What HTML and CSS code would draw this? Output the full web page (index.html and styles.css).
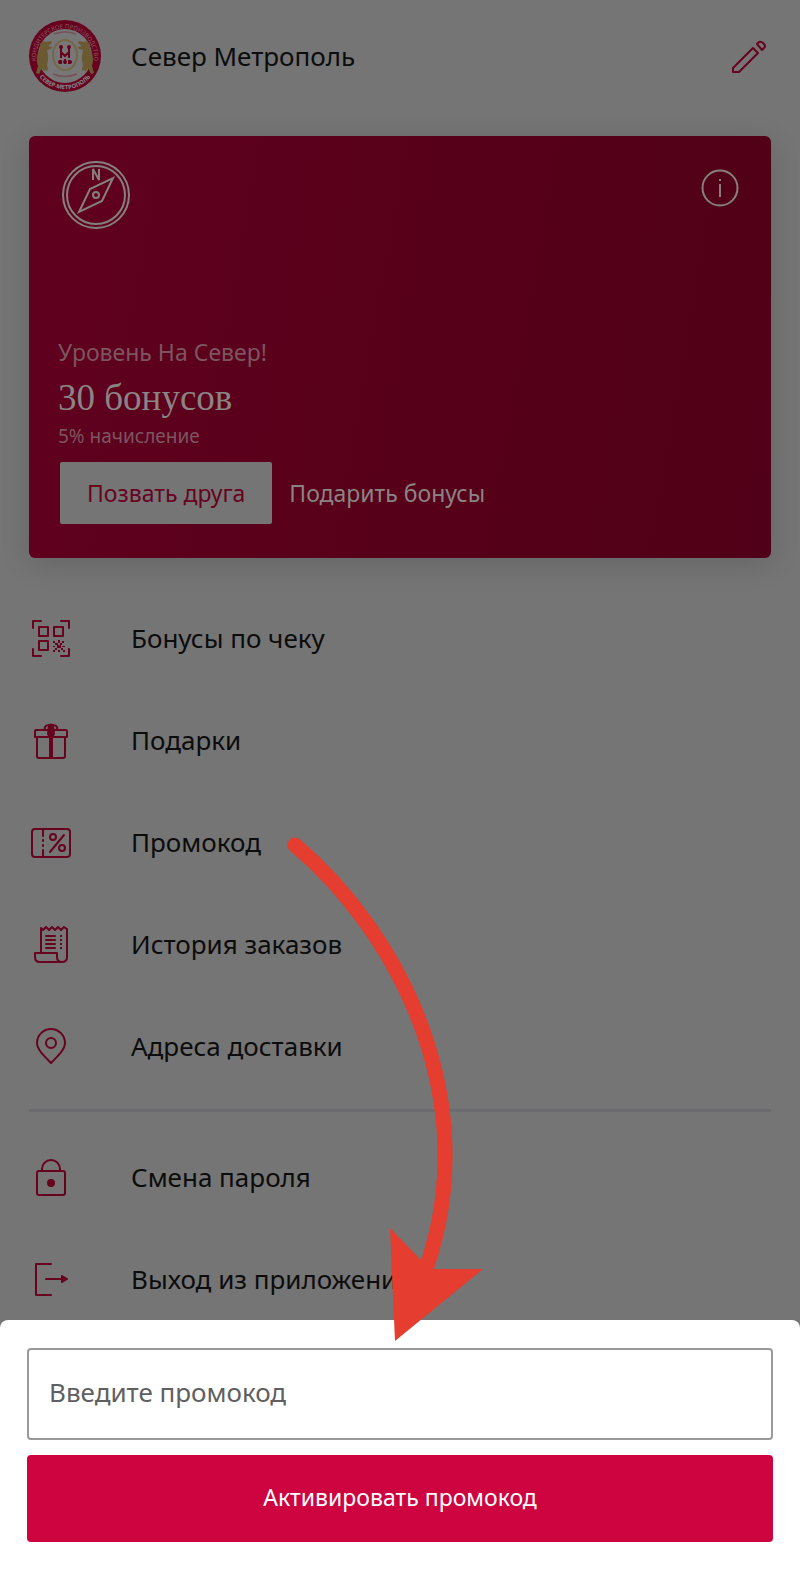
FILE: index.html
```html
<!DOCTYPE html>
<html lang="ru">
<head>
<meta charset="utf-8">
<meta name="viewport" content="width=device-width, initial-scale=1">
<title>Север Метрополь</title>
<link rel="stylesheet" href="styles.css">
</head>
<body>
<main class="profile">
  <header class="header">
    <svg class="logo" viewBox="0 0 72 72" aria-hidden="true">
      <defs>
        <path id="arc-top" d="M8 45A29 29 0 1 1 64 45"/>
        <path id="arc-bottom" d="M7 52A33 33 0 0 0 65 52"/>
      </defs>
      <circle cx="36" cy="36" r="36" fill="#67021f"/>
      <circle cx="36" cy="36" r="27" fill="#777"/>
      <g fill="#6b5a31">
        <path id="bear" d="M11 24l3-3 3 1 5-1 1 2-4 3 4 1-1 2-4 1c1 5 2 9 0 14l1 6-4 1-2-3-3 6-3-1 2-7c-2-6-1-12 2-17z"/>
        <use href="#bear" transform="matrix(-1 0 0 1 72 0)"/>
      </g>
      <ellipse cx="36" cy="35" rx="12" ry="15" fill="none" stroke="#746747" stroke-width="2"/>
      <path d="M25 14q11-4 22 0M24 54q12 5 24 0" fill="none" stroke="#745159" stroke-width="1.500"/>
      <path d="M32 34v-7M40 34v-7M32 38v-6l4 4 4-4v6M32 44v-4M36 44v-5M40 44v-4" fill="none" stroke="#67021f" stroke-width="2"/>
      <g fill="#67021f"><circle cx="32" cy="27" r="2"/><circle cx="40" cy="27" r="2"/><circle cx="31" cy="42" r="2"/><circle cx="41" cy="42" r="2"/><circle cx="36" cy="42" r="2"/></g>
      <text class="logo-text"><textPath href="#arc-top" startOffset="50%">КОНДИТЕРСКОЕ ПРОИЗВОДСТВО</textPath></text>
      <text class="logo-text logo-name"><textPath href="#arc-bottom" startOffset="50%">СЕВЕР-МЕТРОПОЛЬ</textPath></text>
    </svg>
    <h1 class="name">Север Метрополь</h1>
    <button class="icon-button" type="button" aria-label="Редактировать">
      <svg class="icon-edit" viewBox="0 0 36 36"><path d="M2 34v-4L22 10l5 5L8 34zM26 6l2-2q2-1 4 1l1 1q2 2 0 4l-2 2z"/></svg>
    </button>
  </header>

  <section class="card">
    <div class="card-top">
      <svg class="compass" viewBox="0 0 70 70" aria-hidden="true">
        <circle cx="35" cy="35" r="33"/><circle cx="35" cy="35" r="29"/>
        <path d="M52 18L41 41 18 52 29 29z"/><circle cx="35" cy="35" r="3"/>
        <path d="M32 20V9l6 11V9"/>
      </svg>
      <button class="icon-button" type="button" aria-label="Информация">
        <svg class="icon-info" viewBox="0 0 38 38"><circle cx="19" cy="19" r="17.500"/><path d="M19 15v13M19 10v2"/></svg>
      </button>
    </div>
    <p class="level">Уровень На Север!</p>
    <p class="bonus">30 бонусов</p>
    <p class="rate">5% начисление</p>
    <div class="card-actions">
      <button class="invite" type="button">Позвать друга</button>
      <button class="donate" type="button">Подарить бонусы</button>
    </div>
  </section>

  <nav class="menu">
    <a class="item" href="#check">
      <svg class="icon" viewBox="0 0 42 42"><path d="M3 10V3h8M31 3h8v7M39 31v7h-8M11 38H3v-7M9 9h9v9H9zM24 9h9v9h-9zM9 23h9v9H9z"/><path class="solid bare" d="M23 23h2v2h-2zM28 22h2v3h-2zM32 23h2v2h-2zM25 25h3v2h-3zM30 25h2v2h-2zM27 27h4v3h-4zM23 28h2v1h-2zM32 28h3v1h-3zM25 30h2v2h-2zM31 30h2v2h-2zM23 32h2v2h-2zM28 32h2v2h-2zM33 32h2v2h-2z"/></svg>
      <span>Бонусы по чеку</span></a>
    <a class="item" href="#gifts">
      <svg class="icon" viewBox="0 0 42 42"><path d="M7 17v19q0 2 2 2h24q2 0 2-2V17M6 10h30q1 0 1 2v5H5v-5q0-2 1-2zM19 10h-3q-2-1-1-3 1-2 4-2l2 2 2-2q3 0 4 2 1 2-1 3h-3"/><path class="solid bare" d="M18 5q3-3 6 0l1 9-2 4v20h-4V18l-2-4z"/></svg>
      <span>Подарки</span></a>
    <a class="item" href="#promo">
      <svg class="icon" viewBox="0 0 42 42"><rect x="2" y="7" width="38" height="28" rx="3"/><path d="M13 8v6M13 18v1M13 23v1M13 28v6M34 13L20 30"/><circle cx="23" cy="15" r="3"/><circle cx="32" cy="26" r="3"/></svg>
      <span>Промокод</span></a>
    <a class="item" href="#orders">
      <svg class="icon" viewBox="0 0 42 42"><path d="M11 28V4l2 2 3-3 3 3 3-3 3 3 3-3 3 3 3-3 3 2v28q0 5-5 5H10q-5 0-5-5v-4h22v4q0 5 5 5"/><path d="M16 12h9M16 16h9M16 20h9M16 24h9"/><path class="solid bare" d="M30 11h2v2h-2zM30 15h2v2h-2zM30 19h2v2h-2zM30 23h2v2h-2z"/></svg>
      <span>История заказов</span></a>
    <a class="item" href="#addresses">
      <svg class="icon" viewBox="0 0 42 42"><path d="M21 37C13 29 7 23 7 17a14 14 0 0 1 28 0c0 6-6 12-14 20z"/><circle cx="21" cy="17" r="5"/></svg>
      <span>Адреса доставки</span></a>
    <hr class="divider">
    <a class="item" href="#password">
      <svg class="icon" viewBox="0 0 42 42"><rect x="7" y="14" width="28" height="24" rx="2"/><path d="M12 14v-2a9 9 0 0 1 18 0v2"/><circle class="solid" cx="21" cy="26" r="3"/></svg>
      <span>Смена пароля</span></a>
    <a class="item" href="#logout">
      <svg class="icon" viewBox="0 0 42 42"><path d="M21 5H6v31h15M16 20h18"/><path class="solid" d="M32 17l5 3-5 3z"/></svg>
      <span>Выход из приложения</span></a>
  </nav>
</main>

<form class="sheet">
  <input class="promo-input" type="text" placeholder="Введите промокод" aria-label="Введите промокод">
  <button class="submit" type="button">Активировать промокод</button>
</form>

<svg class="arrow" viewBox="0 0 220 540" aria-hidden="true">
  <path d="M15 25C118 112 205 279 146 449" fill="none" stroke="#e53d30" stroke-width="15" stroke-linecap="round"/>
  <path d="M110 408L141 440 153 449H203L115 521z" fill="#e53d30"/>
</svg>
</body>
</html>
```
FILE: styles.css
```css
* { box-sizing: border-box; }

body {
  margin: 0;
  min-height: 100vh;
  position: relative;
  background: #757575;
  color: #0c0c0c;
  font-family: "Noto Sans", "Open Sans", sans-serif;
  font-size: 26px;
}

button { font: inherit; border: 0; cursor: pointer; }
h1, p { margin: 0; font-weight: 400; }

.profile { padding: 0 29px; }

.header {
  display: flex;
  align-items: center;
  gap: 30px;
  height: 112px;
  margin-bottom: 24px;
}
.logo { width: 72px; height: 72px; flex: none; }
.logo-text {
  font: 6px "Noto Sans", sans-serif;
  fill: #8a5a66;
  text-anchor: middle;
}
.logo-name { font-weight: 700; fill: #888; }
.name { flex: 1; font-size: 26px; }

.icon-button {
  display: flex;
  padding: 0;
  background: none;
}
.icon-edit {
  width: 36px;
  height: 36px;
  margin-right: 4px;
  fill: none;
  stroke: #67021f;
  stroke-width: 2;
  stroke-linejoin: round;
}

.card {
  padding: 24px 32px 34px 29px;
  border-radius: 6px;
  background: linear-gradient(100deg, #60001f, #560019 60%, #500018);
  box-shadow: 0 6px 30px rgba(0, 0, 0, 0.14);
  color: #8a8484;
}
.card-top {
  display: flex;
  justify-content: space-between;
  height: 176px;
  padding-left: 3px;
}
.compass, .icon-info {
  fill: none;
  stroke: #858080;
  stroke-width: 2;
}
.compass { width: 70px; height: 70px; }
.icon-info { width: 38px; height: 38px; margin-top: 9px; }
.card-top .icon-button { align-self: flex-start; }

.level { font-size: 23px; line-height: 32px; color: #7c5560; }
.bonus {
  font-family: "Liberation Serif", serif;
  font-size: 37px;
  line-height: 60px;
}
.rate { font-size: 19px; line-height: 16px; color: #7c5560; }
.card-actions {
  display: flex;
  align-items: center;
  gap: 17px;
  margin-top: 18px;
  padding-left: 2px;
}
.invite, .donate { height: 62px; padding-bottom: 2px; font-size: 23px; }
.invite {
  padding-right: 27px;
  padding-left: 27px;
  border-radius: 2px;
  background: #757575;
  color: #67021f;
}
.donate { padding-right: 0; padding-left: 0; background: none; color: #8a8484; }

.menu { margin-top: 30px; }
.item {
  display: flex;
  align-items: center;
  gap: 59px;
  height: 102px;
  padding-left: 1px;
  color: inherit;
  text-decoration: none;
}
.item span { padding-bottom: 2px; }
.icon {
  width: 42px;
  height: 42px;
  flex: none;
  fill: none;
  stroke: #67021f;
  stroke-width: 2;
  stroke-linecap: round;
  stroke-linejoin: round;
}
.solid { fill: #67021f; }
.bare { stroke: none; }
.divider {
  height: 3px;
  margin: 11px 0 15px;
  border: 0;
  background: #6c6c70;
}

.sheet {
  position: fixed;
  right: 0;
  bottom: 0;
  left: 0;
  display: flex;
  flex-direction: column;
  gap: 15px;
  padding: 28px 27px 33px;
  border-radius: 8px 8px 0 0;
  background: #fff;
}
.promo-input {
  width: 100%;
  height: 92px;
  padding: 0 20px 4px;
  border: 2px solid #999;
  border-radius: 4px;
  background: #fff;
  font: inherit;
  color: #222;
}
.promo-input::placeholder { color: #606060; opacity: 1; }
.submit {
  height: 87px;
  padding-bottom: 4px;
  border-radius: 4px;
  background: #cd0440;
  color: #fff;
  font-size: 23px;
}

.arrow {
  position: absolute;
  top: 820px;
  left: 280px;
  width: 220px;
  height: 540px;
  pointer-events: none;
}
```
